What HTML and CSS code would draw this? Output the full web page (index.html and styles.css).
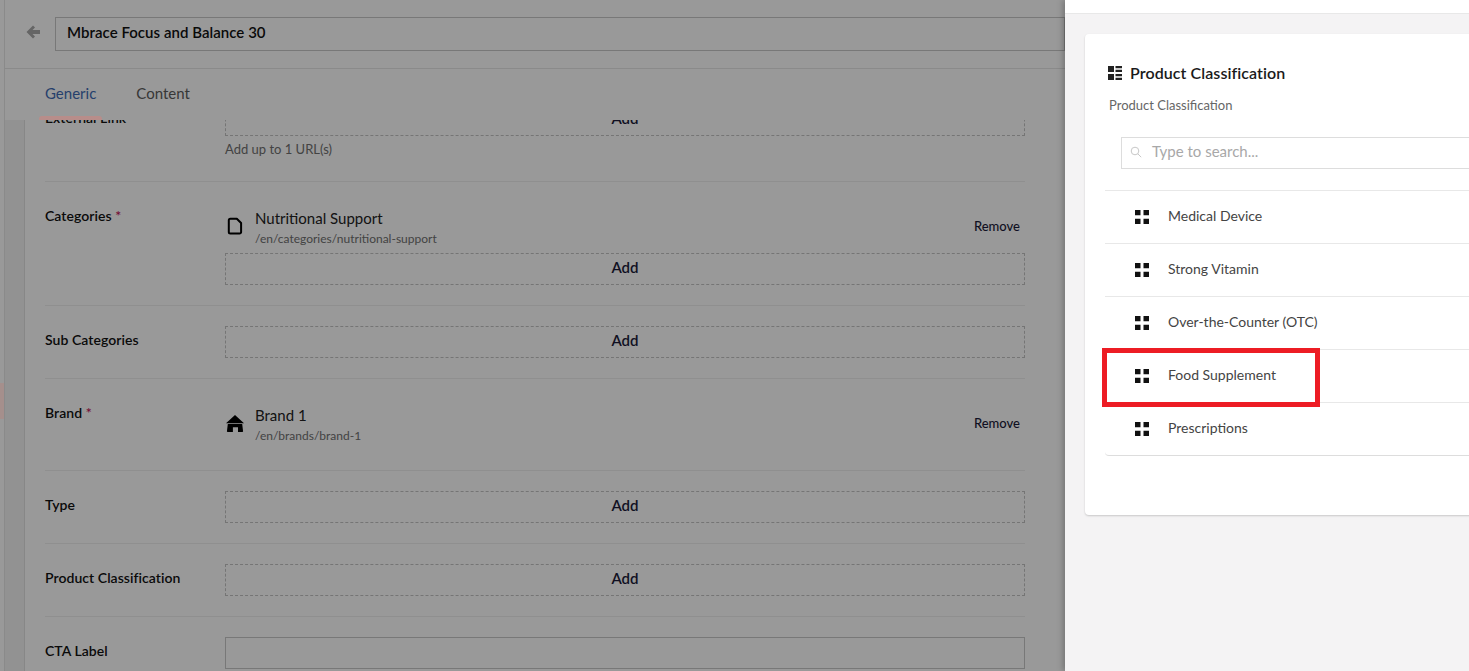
FILE: index.html
```html
<!DOCTYPE html>
<html lang="en">
<head>
<meta charset="utf-8">
<title>Mbrace Focus and Balance 30</title>
<link rel="stylesheet" href="styles.css">
</head>
<body>
<svg class="defs" width="0" height="0" aria-hidden="true">
  <symbol id="grid" viewBox="0 0 14 14"><path d="M0 0h5.500v5.200H0zM8.500 0H14v5.200H8.500zM0 8.800h5.500V14H0zM8.500 8.800H14V14H8.500z"/></symbol>
</svg>
<div class="app">
  <main class="main">
    <aside class="rail"><div class="rail-item"></div></aside>
    <div class="panel">
      <header class="head">
        <svg class="back" viewBox="0 0 14 14" width="14" height="14"><path d="M7 .5 .5 7 7 13.500l2-2L6.500 9H14V5H6.500L9 2.500z"/></svg>
        <div class="title-input">Mbrace Focus and Balance 30</div>
      </header>
      <nav class="tabs">
        <span class="tab tab-active">Generic</span>
        <span class="tab">Content</span>
      </nav>
      <div class="scroll">
        <div class="form-card">
          <form class="form">
            <div class="row">
              <div class="label">External Link</div>
              <div class="field">
                <div class="add">Add</div>
                <div class="hint">Add up to 1 URL(s)</div>
              </div>
            </div>
            <div class="row">
              <div class="label">Categories <span class="req">*</span></div>
              <div class="field">
                <div class="item">
                  <svg class="item-icon" viewBox="0 0 18 18" width="18" height="18"><path class="outline" d="M4.300 1.700h6.500l4.300 4.300v9a1.500 1.500 0 0 1-1.500 1.500H4.300A1.500 1.500 0 0 1 2.800 15V3.200a1.500 1.500 0 0 1 1.500-1.500z"/></svg>
                  <div class="item-text">
                    <div class="item-name">Nutritional Support</div>
                    <div class="item-path">/en/categories/nutritional-support</div>
                  </div>
                  <span class="remove">Remove</span>
                </div>
                <div class="add">Add</div>
              </div>
            </div>
            <div class="row">
              <div class="label">Sub Categories</div>
              <div class="field"><div class="add">Add</div></div>
            </div>
            <div class="row">
              <div class="label">Brand <span class="req">*</span></div>
              <div class="field">
                <div class="item">
                  <svg class="item-icon" viewBox="0 0 18 18" width="18" height="18"><path d="M9 1 18 9.300H0zM1.800 10h14.400l.8 6.700a1 1 0 0 1-1 1.300h-4v-4.800H6.900V18H2a1 1 0 0 1-1-1.300z"/></svg>
                  <div class="item-text">
                    <div class="item-name">Brand 1</div>
                    <div class="item-path">/en/brands/brand-1</div>
                  </div>
                  <span class="remove">Remove</span>
                </div>
              </div>
            </div>
            <div class="row">
              <div class="label">Type</div>
              <div class="field"><div class="add">Add</div></div>
            </div>
            <div class="row">
              <div class="label">Product Classification</div>
              <div class="field"><div class="add">Add</div></div>
            </div>
            <div class="row">
              <div class="label">CTA Label</div>
              <div class="field"><div class="text-box"></div></div>
            </div>
          </form>
        </div>
      </div>
    </div>
    <div class="overlay"></div>
  </main>
  <section class="drawer">
    <div class="drawer-top"></div>
    <div class="drawer-body">
      <div class="card">
        <h2 class="card-title">
          <svg class="title-icon" viewBox="0 0 14 14" width="14" height="14"><path d="M0 0h6v6H0zM7.500 0H14v2.200H7.500zM7.500 3.800H14V6H7.500zM0 8h6v6H0zM7.500 8H14v2.200H7.500zM7.500 11.800H14V14H7.500z"/></svg>
          <span class="title-text">Product Classification</span>
        </h2>
        <p class="card-sub">Product Classification</p>
        <div class="search">
          <svg class="search-icon" viewBox="0 0 12 12" width="12" height="12"><circle cx="5" cy="5" r="3.800"/><path d="m7.800 7.800 3.400 3.400"/></svg>
          <span class="search-text">Type to search...</span>
        </div>
        <ul class="list">
          <li class="list-row"><svg class="grid" width="14" height="14"><use href="#grid"/></svg><span class="row-text">Medical Device</span></li>
          <li class="list-row"><svg class="grid" width="14" height="14"><use href="#grid"/></svg><span class="row-text">Strong Vitamin</span></li>
          <li class="list-row"><svg class="grid" width="14" height="14"><use href="#grid"/></svg><span class="row-text">Over-the-Counter (OTC)</span></li>
          <li class="list-row"><svg class="grid" width="14" height="14"><use href="#grid"/></svg><span class="row-text">Food Supplement</span><div class="callout"></div></li>
          <li class="list-row"><svg class="grid" width="14" height="14"><use href="#grid"/></svg><span class="row-text">Prescriptions</span></li>
        </ul>
      </div>
    </div>
  </section>
</div>
</body>
</html>
```

FILE: styles.css
```css
* { box-sizing: border-box; }
html, body { margin: 0; height: 100%; overflow: hidden; }
body { font-family: "Lato", "Liberation Sans", sans-serif; color: #000; background: #f4f3f4; }
.defs { position: absolute; }
.app { display: flex; height: 671px; width: 1469px; overflow: hidden; }

/* dimmed page */
.main { position: relative; flex: 0 0 1065px; display: flex; background: #fff; overflow: hidden; }
.overlay { position: absolute; inset: 0; background: rgba(0, 0, 0, .4); }
.rail { flex: 0 0 5px; border-right: 1px solid #e6e6e6; }
.rail-item { position: relative; z-index: 1; margin-top: 383px; height: 36px; background: #a58f8c; }
.panel { flex: 1; min-width: 0; display: flex; flex-direction: column; }
.head { flex: 0 0 69px; display: flex; align-items: center; padding-left: 21px; border-bottom: 1px solid #e6e6e6; }
.back { fill: #a8a8a8; margin: -4px 15px 0 0; flex: none; }
.title-input { flex: 1; height: 34px; line-height: 28px; padding-left: 11px; border: 1px solid #c8c8c8; font-size: 15px; font-weight: 600; letter-spacing: .04px; color: #111; }
.tabs { flex: 0 0 51px; display: flex; gap: 40px; padding: 14px 0 0 40px; font-size: 15px; line-height: 20px; }
.tab { position: relative; color: #5c5c5c; height: 37px; }
.tab-active { color: #3f6cb5; }
.tab-active::after { content: ""; position: absolute; z-index: 2; left: -6px; bottom: 0; width: 63px; height: 4px; border-radius: 3px 3px 0 0; background: #b88d8a; }

.scroll { flex: 1; min-height: 0; display: flex; background: #f4f3f4; padding-left: 19px; overflow: hidden; }
.form-card { flex: 1; background: #fff; border-left: 1px solid #e2e2e2; }
.form { margin-top: -36px; padding: 0 40px 0 20px; }
.row { display: flex; padding: 20px 0; border-bottom: 1px solid #eee; }
.row:last-child { border-bottom: 0; }
.label { flex: 0 0 180px; font-size: 14px; line-height: 28px; font-weight: 600; letter-spacing: .05px; color: #111; }
.req { color: #c2185b; }
.field { flex: 1; min-width: 0; }
.add { height: 32px; line-height: 27px; text-align: center; font-size: 15px; font-weight: 600; color: #1c1c3a; border: 1px dashed #c4c4c4; }
.hint { margin-top: 3px; font-size: 13px; line-height: 20px; height: 22px; color: #707070; }
.item { height: 51px; display: flex; align-items: flex-start; padding: 6px 5px 0 0; }
.item-icon { flex: none; margin: 9px 11px 0 1px; fill: #000; }
.outline { fill: none; stroke: #000; stroke-width: 2; stroke-linejoin: round; }
.item-text { flex: 1; min-width: 0; }
.item-name { font-size: 15px; line-height: 20px; color: #222; }
.item-path { font-size: 12px; line-height: 18px; margin-top: 2px; color: #707070; }
.remove { font-size: 13px; font-weight: 500; line-height: 18px; margin-top: 9px; color: #1c1c3a; }
.text-box { height: 32px; border: 1px solid #c8c8c8; }

/* drawer */
.drawer { position: relative; flex: 1; min-width: 0; display: flex; flex-direction: column; background: #f4f3f4; box-shadow: -2px 0 6px rgba(0, 0, 0, .25); overflow: hidden; }
.drawer-top { flex: 0 0 14px; background: #fff; border-bottom: 1px solid #e8e8e8; }
.drawer-body { flex: 1; display: flex; align-items: flex-start; padding: 20px 0 0 20px; }
.card { flex: 0 0 440px; height: 481px; padding: 25px 20px 0; background: #fff; border-radius: 4px; box-shadow: 0 1px 2px rgba(0, 0, 0, .18); }
.card-title { display: flex; align-items: center; gap: 8px; margin: 0 0 0 3px; font-size: 16px; line-height: 28px; font-weight: 600; color: #1a1a1a; }
.title-text { letter-spacing: .08px; }
.title-icon { fill: #222; flex: none; }
.card-sub { margin: 8px 0 0 4px; font-size: 13px; line-height: 20px; color: #666; }
.search { display: flex; align-items: center; height: 32px; margin: 22px 0 0 16px; padding-left: 8px; border: 1px solid #ddd; font-size: 15px; color: #a8a8a8; }
.search-icon { flex: none; margin: -2px 10px 0 0; fill: none; stroke: #c8c8c8; stroke-width: 1; }
.search-text { margin-top: -4px; }
.list { list-style: none; margin: 21px 0 0; padding: 0; border-top: 1px solid #e8e8e8; border-radius: 0 0 4px 4px; border-bottom: 1px solid #ddd; }
.list-row { position: relative; display: flex; align-items: center; height: 53px; padding-left: 30px; font-size: 14px; color: #444; border-bottom: 1px solid #e8e8e8; }
.list-row:last-child { border-bottom: 0; height: 52px; }
.row-text { margin-bottom: 4px; }
.grid { fill: #111; flex: none; margin-right: 19px; }
.callout { position: absolute; left: -3px; top: -2px; width: 218px; height: 59px; border: 5px solid #ed1c24; }
```
